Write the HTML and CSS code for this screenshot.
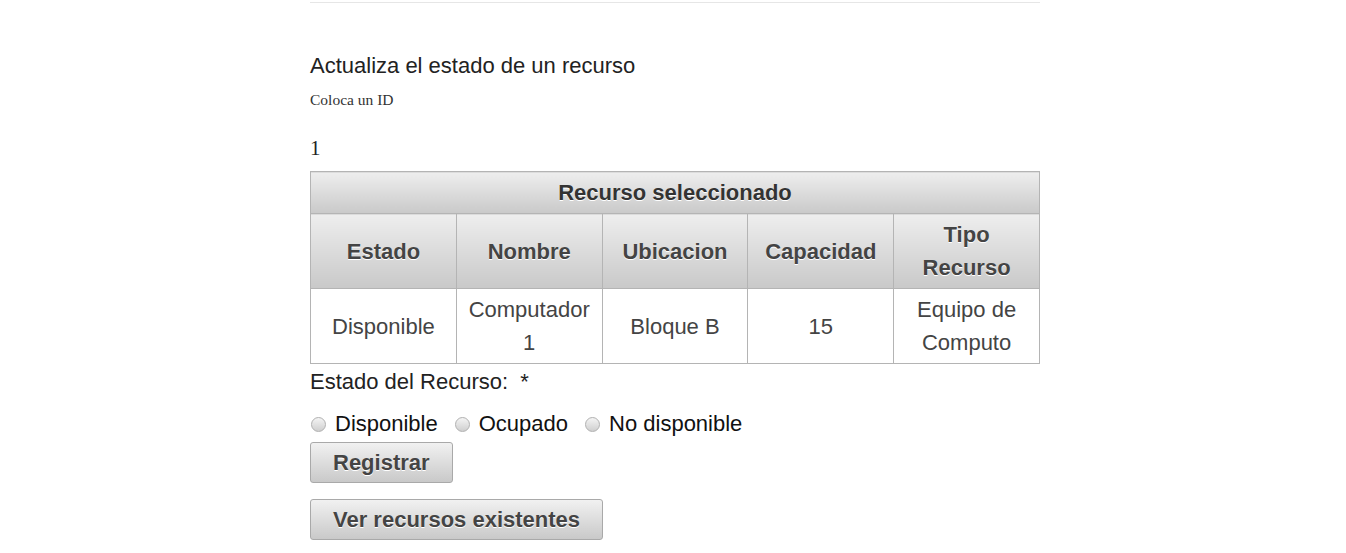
FILE: index.html
```html
<!DOCTYPE html>
<html lang="es">
<head>
<meta charset="utf-8">
<title>Actualiza recurso</title>
<link rel="stylesheet" href="styles.css">
</head>
<body>
<div class="page">
  <hr class="rule">
  <h2 class="title">Actualiza el estado de un recurso</h2>
  <p class="hint">Coloca un ID</p>
  <p class="id">1</p>
  <table class="res">
    <thead>
      <tr><th colspan="5" class="cap">Recurso seleccionado</th></tr>
      <tr><th>Estado</th><th>Nombre</th><th>Ubicacion</th><th>Capacidad</th><th>Tipo Recurso</th></tr>
    </thead>
    <tbody>
      <tr><td>Disponible</td><td>Computador 1</td><td>Bloque B</td><td>15</td><td>Equipo de Computo</td></tr>
    </tbody>
  </table>
  <div class="label">Estado del Recurso:&nbsp; *</div>
  <div class="radios">
    <label class="opt"><input type="radio" name="estado"><span>Disponible</span></label>
    <label class="opt"><input type="radio" name="estado"><span>Ocupado</span></label>
    <label class="opt"><input type="radio" name="estado"><span>No disponible</span></label>
  </div>
  <div class="actions">
    <button class="btn">Registrar</button>
    <button class="btn">Ver recursos existentes</button>
  </div>
</div>
</body>
</html>
```
FILE: styles.css
```css
html, body { margin: 0; padding: 0; background: #fff; }
body { padding-left: 4px; font-family: "Liberation Sans", Arial, sans-serif; color: #222; }
.page { width: 730px; margin: 0 auto; }
.rule { margin: 2px 0 0; border: 0; border-top: 1px solid #e6e6e6; height: 0; }
.title { font-weight: normal; font-size: 22px; color: #222; margin: 50px 0 0; line-height: 26px; }
.hint { font-family: "Liberation Serif", "Times New Roman", serif; font-size: 15.5px; color: #333; margin: 12px 0 0; line-height: 18px; }
.id { font-family: "Liberation Serif", "Times New Roman", serif; font-size: 21px; color: #222; margin: 27px 0 0; line-height: 24px; }
.res { width: 730px; border-collapse: collapse; table-layout: fixed; margin-top: 11px; font-size: 22px; color: #444; }
.res th, .res td { border: 1px solid #b4b4b4; text-align: center; padding: 4px 10px; line-height: 33px; }
.res th { background: linear-gradient(#eeeeee, #c9c9c9); font-weight: bold; color: #444; text-shadow: 0 1px 0 #fff; padding: 4px 10px; }
.res th.cap { padding: 4px 6px; color: #333; }
.res td { background: #fff; color: #444; }
.label { font-size: 22px; color: #222; line-height: 36px; margin-top: 0; }
.radios { display: flex; align-items: center; margin-top: 12px; font-size: 22px; color: #111; }
.opt { display: flex; align-items: center; margin-right: 16px; line-height: 24px; }
.opt input { appearance: none; -webkit-appearance: none; width: 15px; height: 15px; margin: 1px 9px 0 1px; border: 1px solid #b0b0b0; border-radius: 50%; background: linear-gradient(#f4f4f4, #cfcfcf); box-sizing: border-box; }
.actions { display: flex; flex-direction: column; align-items: flex-start; gap: 16px; margin-top: 6px; }
.btn { font-family: "Liberation Sans", Arial, sans-serif; font-weight: bold; font-size: 22px; color: #444; text-shadow: 0 1px 0 #fff; height: 41px; padding: 0 22px; border: 1px solid #a9a9a9; border-radius: 3px; background: linear-gradient(#f1f1f1, #c9c9c9); }
```
